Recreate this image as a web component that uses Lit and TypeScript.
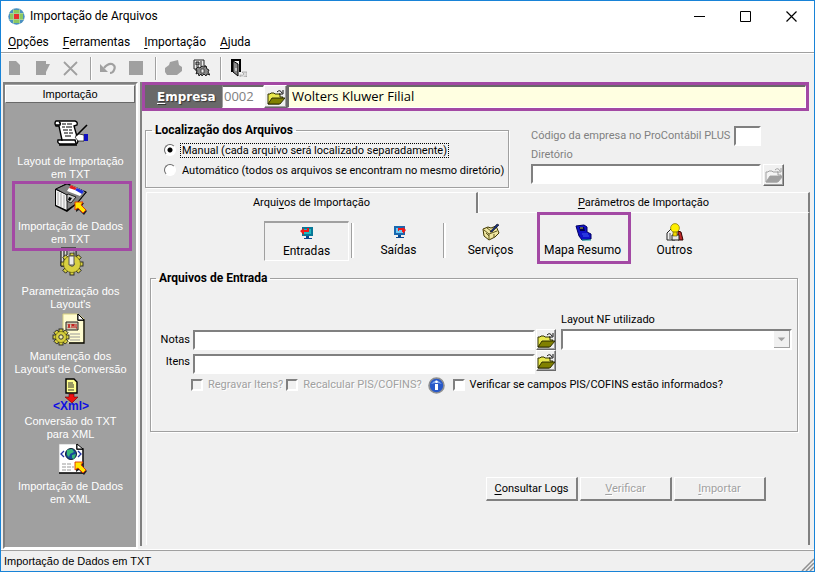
import { LitElement, html, css, svg } from "lit";
import { customElement, property, state } from "lit/decorators.js";
import { classMap } from "lit/directives/class-map.js";

const gear = (cx: number, cy: number, r: number) => svg`
  <g transform="translate(${cx} ${cy})">
    ${[0, 45, 90, 135].map(
      (a) => svg`<rect x="-2" y=${-r} width="4" height=${r * 2} fill="#d8d040" stroke="#222" stroke-width=".9" transform="rotate(${a})"/>`
    )}
    <circle r=${r - 2.5} fill="#d8d040" stroke="#555000" stroke-width=".6"/>
    <circle r="2.2" fill="#f4f0b0" stroke="#333"/>
  </g>`;

const arrow = svg`<path d="M21 20h8l-2 3 5 5-3 4-5-5-3 2z" fill="#222"/>
  <path d="M20 19h8l-2 3 5 5-3 3-5-5-3 2z" fill="#ffe800" stroke="#e03000" stroke-width=".9"/>`;

const big: Record<string, unknown> = {
  scroll: svg`
    <path d="M1 3h19q3 1 2 4l-3 1 4 14q0 4-3 4H5q-3-1-2-4h4L4 8H1q-2-3 0-5z" fill="#fff" stroke="#000" stroke-width="1.4"/>
    <path d="M1 7h4q1-2-1-3M6 22h14l1 3M4 27h18" fill="none" stroke="#000" stroke-width="1.5"/>
    <path d="M7 6h4m1 0h5M7 9h3m1 0h6M8 12h5m1 0h3M9 15h4m1 0h4M10 18h6" stroke="#000" stroke-width="1.2"/>
    <path d="M32 7L21 18" stroke="#000" stroke-width="1.6"/>
    <path d="M20 19l4-3 5 1v6h-6z" fill="#fff" stroke="#000" stroke-width=".7"/>
    <path d="M29 16h4v7h-4z" fill="#1010c0"/>`,
  floppy: svg`
    <path d="M0 6v17l12 6 10-8L32 9 12 0z" fill="#000"/>
    <path d="M1 7l11 5v15L1 22z" fill="#f4f4f4"/>
    <path d="M3 9v13M6 10v14M9 12v13" stroke="#a8a8a8"/>
    <path d="M1 6l11-5 19 8-9 11-10 7V12z" fill="#808080" stroke="#000" stroke-width=".8"/>
    <path d="M16 2l13 6-4 5-13-5z" fill="#fff"/>
    <path d="M16 2l6 3-2 2-6-2z" fill="#e02020"/><path d="M22 5l7 3-2 3-7-4z" fill="#2030e0"/>
    <path d="M13 11l8 3-5 6-4-2V12z" fill="#c8c8c8" stroke="#000" stroke-width=".8"/><path d="M14 14l3 1-2 3-2-1z" fill="#000"/>
    ${arrow}`,
  params: svg`
    <path d="M6 0h15v18H6z" fill="#d8d8d8" stroke="#000"/>
    <path d="M9 3v12M12 2v5" stroke="#000"/><path d="M14 3h5v7h-5z" fill="#fff" stroke="#777"/>
    ${gear(17, 16, 11)}
    <path d="M14 8h5v9h-5z" fill="#eee" stroke="#555"/>`,
  xmlGear: svg`
    <path d="M8 1h15l6 5v24H8z" fill="#fffcd0" stroke="#d8d080"/>
    <path d="M23 1v6h6v23H14" fill="none" stroke="#000" stroke-width="1.3"/><path d="M23 1l6 6h-6z" fill="#fff" stroke="#000"/>
    <path d="M11 9h12v8H11z" fill="#d0c8b0" stroke="#222"/>
    <path d="M13 11l2 4m0-4l-2 4m4 0v-4l1 2 1-2v4m2-4v4h1" stroke="#c01010" fill="none"/>
    <path d="M15 21h10M15 24h10M15 27h10" stroke="#999"/>
    ${gear(6, 24, 8)}`,
  toXml: svg`
    <path d="M11 1h8l3 3v11H11z" fill="#ffff90" stroke="#000" stroke-width="1.4"/>
    <path d="M13 5h5M13 7h6M13 9h6M13 12h6" stroke="#333"/>
    <path d="M14 16h5v3h4l-6 6-7-6h4z" fill="#f01010" stroke="#600" stroke-width=".6"/>
    <text x="16" y="32" class="xmltext">&lt;Xml&gt;</text>`,
  globe: svg`
    <path d="M4 1h18l6 5v24H4z" fill="#fff" stroke="#aaa" stroke-width=".6"/>
    <path d="M22 1v5h6v24H4" fill="none" stroke="#000" stroke-width="1.4"/><path d="M22 1l6 5h-6z" fill="#fff" stroke="#000"/>
    <circle cx="16" cy="11" r="5.5" fill="#184898" stroke="#102030"/>
    <path d="M12 7l5-1 2 3-4 2-1 3-2-2zM17 12l4-1-2 5-2-1z" fill="#38b878"/>
    <path d="M9 8l-3 3 3 3M23 8l3 3-3 3" fill="none" stroke="#2030a0" stroke-width="1.3"/>
    <path d="M7 21h10M7 24h12M7 27h10" stroke="#999" stroke-dasharray="4 1"/>${arrow}`,
};

const small: Record<string, unknown> = {
  page: svg`<path d="M3 2h7l4 4v10H3z" fill="#a0a0a0"/>`,
  edit: svg`<path d="M2 2h10v3h4l-4 8v3H2z" fill="#a0a0a0"/>`,
  cross: svg`<path d="M2 3l13 13M15 3L2 16" stroke="#a0a0a0" stroke-width="1.8"/>`,
  undo: svg`<path d="M5 9q4-5 8-4 4 2 2 6-1 3-4 3" fill="none" stroke="#a0a0a0" stroke-width="2.2"/><path d="M1 5v8h8z" fill="#a0a0a0"/>`,
  square: svg`<path d="M2 2h14v14H2z" fill="#a0a0a0"/>`,
  print: svg`<path d="M6 3l8-2 1 5 3 2v4l-5 4H3l-2-3V9l4-3z" fill="#a0a0a0"/>`,
  machine: svg`<path d="M2 1h10v6h2v5H4V10H2z" fill="#eee" stroke="#222"/>
    <path d="M4 3h3v3H4zM9 2v6M4 8h3" stroke="#222" fill="#999"/>
    <path d="M4 10l2-2 2 1 2-2 2 1 2-1 1 3 2 1-1 2 2 3-3-1-1 2-2-2-2 2-1-2-2 2-1-3-2 1 1-3z" fill="#888" stroke="#111" stroke-width=".9"/>
    <path d="M9 10h3v4H9z" fill="#eee" stroke="#333" stroke-width=".8"/>`,
  door: svg`<path d="M2 0h10v13h-2V2H4v11H2z" fill="#000"/><path d="M4 2l5 3v12l-5-4z" fill="#888" stroke="#000"/>
    <path d="M7 9v3" stroke="#fff"/><path d="M11 16q3 1 4-1l-2-2h5v5l-1-1q-3 3-6 1z" fill="#ddd" stroke="#999" stroke-width=".7"/>`,
  folder: svg`<path d="M1 6h2l1-1h3l1 1h5v3h3l-4 7H1z" fill="#e8e850" stroke="#333300"/>
    <path d="M5 10h13l-5 6H1z" fill="#808000" stroke="#222200" stroke-width=".9"/><path d="M10 4q3-3 5 1M16 2v4h-4" fill="none" stroke="#111"/>`,
  folderOff: svg`<path d="M1 6h2l1-1h3l1 1h5v3h3l-4 7H1z" fill="#f4f4f4" stroke="#a0a0a0"/>
    <path d="M5 10h13l-5 6H1z" fill="#a0a0a0" stroke="#a0a0a0" stroke-width=".9"/><path d="M10 4q3-3 5 1M16 2v4h-4" fill="none" stroke="#a0a0a0"/>`,
  entradas: svg`<path d="M4 3h11v9H4z" fill="#087898"/><path d="M6 5h7v5H6z" fill="#20b8c0"/>
    <path d="M8 12h3v2H8zM6 14h8v1H6z" fill="#084890"/><path d="M2 7l4-3v2h3V4h2v4H6v3z" fill="#f01818"/>`,
  saidas: svg`<path d="M4 3h11v9H4z" fill="#1868b0"/><path d="M6 5h7v5H6z" fill="#70c8f0"/>
    <path d="M8 12h3v2H8zM6 14h8v1H6z" fill="#084890"/><path d="M8 5h5V4l3 3-3 4V9h-1V7H9v1H8z" fill="#f01818"/>`,
  servicos: svg`<path d="M1 6l5-2 3 1 5-2 3 7-4 4-6 3-5-4z" fill="#efe6a0" stroke="#403800"/>
    <path d="M2 7l5 4 8-3M7 11v5M4 10l3 3M12 11v3M5 5l4 3" stroke="#605820" fill="none"/><path d="M8 9l7-8 2 1-7 7z" fill="#183080" stroke="#111" stroke-width=".6"/>`,
  mapa: svg`<path d="M2 3l8-1 3 2v5l4 2v5l-9 1-3-4z" fill="#1010c8" stroke="#000060"/>
    <path d="M5 4h5l1 4H6z" fill="#000050"/><path d="M6 5h3" stroke="#c0c040"/><path d="M8 11h6M9 13h6" stroke="#4060f0"/><path d="M8 17h9" stroke="#10a0a0"/>`,
  outros: svg`<path d="M1 10l4-4 4 3v8H1z" fill="#f0f0f0" stroke="#222"/><path d="M4 10v6" stroke="#555"/>
    <path d="M12 8l3 1 2 8h-5z" fill="#c02828" stroke="#300"/><path d="M6 12h7v5H6z" fill="#e8e8e8" stroke="#222"/>
    <circle cx="9" cy="5" r="4.4" fill="#fff000" stroke="#807000" stroke-width=".7"/><path d="M7 9h4v4H7z" fill="#f0d800" stroke="#605000" stroke-width=".6"/>`,
};

const icon = (name: string) => html`<svg class="ico" viewBox="0 0 18 18" aria-hidden="true">${small[name]}</svg>`;

@customElement("side-item")
class SideItem extends LitElement {
  @property() icon = "";
  @property({ type: Array }) lines: string[] = [];
  @property({ type: Boolean }) marked = false;

  static styles = css`
    :host { display: block; }
    .item {
      display: flex; flex-direction: column; align-items: center; gap: 5px;
      width: 100%; height: 65px; padding: 0; border: 0; background: none; color: #fff;
      font: 11px/13px "Liberation Sans", Arial, sans-serif; white-space: nowrap;
    }
    .pic { width: 32px; height: 32px; flex: none; overflow: visible; }
    .xmltext { font: bold 12px "Liberation Sans", sans-serif; fill: #1010e0; text-anchor: middle; }
    .marked { position: relative; z-index: 1; }
    .marked::after { content: ""; position: absolute; inset: -2px 4px -3px 7px; border: 3px solid #a349a4; }
  `;

  render() {
    return html`<button class=${classMap({ item: true, marked: this.marked })}>
      <svg class="pic" viewBox="0 0 32 32" aria-hidden="true">${big[this.icon]}</svg>
      <span>${this.lines[0]}<br />${this.lines[1]}</span>
    </button>`;
  }
}

@customElement("app-root")
class AppRoot extends LitElement {
  @state() private mode = "manual";

  private modules = [
    { icon: "scroll", lines: ["Layout de Importação", "em TXT"] },
    { icon: "floppy", lines: ["Importação de Dados", "em TXT"], marked: true },
    { icon: "params", lines: ["Parametrização dos", "Layout's"] },
    { icon: "xmlGear", lines: ["Manutenção dos", "Layout's de Conversão"] },
    { icon: "toXml", lines: ["Conversão do TXT", "para XML"] },
    { icon: "globe", lines: ["Importação de Dados", "em XML"] },
  ];
  private kinds = [
    ["entradas", "Entradas"],
    ["saidas", "Saídas"],
    ["servicos", "Serviços"],
    ["mapa", "Mapa Resumo"],
    ["outros", "Outros"],
  ];

  static styles = css`
    :host { display: block; }
    * { box-sizing: border-box; }
    button, input, select { font: inherit; color: inherit; margin: 0; }
    button { padding: 0; }
    u { text-underline-offset: 2px; }
    .ico { width: 18px; height: 18px; display: block; flex: none; }
    .window {
      display: flex; flex-direction: column; min-height: 100vh; border: 1px solid #1883d7;
      background: #f0f0f0; color: #000; font: 11px/14px Roboto, "Noto Sans", sans-serif; white-space: nowrap;
    }
    .title { display: flex; align-items: center; height: 30px; padding-left: 7px; background: #fff; font-size: 12px; }
    .title h1 { font: inherit; margin: 0 0 0 5px; flex: 1; }
    .logo { width: 17px; height: 17px; }
    .win { width: 46px; height: 30px; border: 0; background: none; display: grid; place-items: center; }
    .menu { display: flex; gap: 14px; height: 22px; padding: 0 7px; align-items: center; background: #fff; border-bottom: 1px solid #a0a0a0; font-size: 12px; }
    .menu a { color: inherit; text-decoration: none; }
    .tools { display: flex; align-items: center; height: 29px; padding-left: 5px; border-top: 1px solid #fff; }
    .tools button { width: 28px; height: 26px; border: 0; background: none; display: grid; place-items: center start; }
    .tools hr { width: 2px; height: 23px; margin: 0 7px 0 0; border: 0; border-left: 1px solid #a0a0a0; background: #fff; }
    .body { display: flex; flex: 1; border-bottom: 1px solid #fff; }
    .side { width: 135px; flex: none; margin-left: 2px; background: #a0a0a0; border: 2px solid; border-color: #808080 #fff #fff #808080; }
    .side h2 { margin: 1px 1px 15px 0; height: 18px; font: 11px/17px "Liberation Sans", Arial, sans-serif; text-align: center; background: #f0f0f0; border: 1px solid; border-color: #fff #696969 #696969 #fff; }
    .main { flex: 1; min-width: 0; margin: 0 4px 3px 2px; border-left: 2px solid #808080; }
    .company { display: flex; height: 29px; margin-right: 1px; border: 3px solid #a349a4; background: #696969; }
    .company label { width: 77px; padding-left: 12px; font: bold 12px/24px "DejaVu Sans", Verdana, sans-serif; color: #fff; text-shadow: 1px 1px 1px #333; }
    .company input { border: 1px solid; border-width: 2px 1px 1px 2px; border-color: #696969 #fff #fff #696969; padding: 0 0 2px 3px; border-radius: 0; height: 23px; font-size: 13px; min-width: 0; font-family: "Open Sans", "Noto Sans", sans-serif; }
    .company .code { width: 42px; color: #808080; padding-left: 1px; background: #fff; border-left: 1px solid #a0a0a0; }
    .company .name { flex: 1; background: #ffffe1; }
    .pick { width: 20px; height: 21px; border: 1px solid; border-color: #fff #696969 #696969 #fff; box-shadow: inset -1px -1px #a0a0a0; background: #f0f0f0; display: grid; place-items: center; flex: none; }
    .company .pick { width: 23px; height: 23px; }
    .where { display: grid; grid-template-columns: 364px 1fr; gap: 22px; padding: 11px 0 0 3px; }
    fieldset { margin: 0; min-width: 0; border: 1px solid #a0a0a0; box-shadow: 1px 1px #fff, inset 1px 1px #fff; }
    legend { padding: 0 3px; font: bold 12px/16px Roboto, "Noto Sans", sans-serif; }
    .mode { height: 66px; padding: 2px 4px 0 18px; }
    .mode legend { margin-left: -12px; }
    .mode label { display: flex; align-items: center; gap: 5px; height: 20px; }
    .mode span { padding: 0 1px; line-height: 13px; }
    .mode input { appearance: none; flex: none; width: 12px; height: 12px; border: 1px solid; border-color: #696969 #fff #fff #696969; border-radius: 50%; background: #fff; }
    .mode input:checked { background: radial-gradient(circle, #000 2px, #fff 3px); }
    .mode input:checked + span { outline: 1px dotted #000; }
    .field { border: 2px solid; border-color: #808080 #fff #fff #808080; background: #fff; height: 20px; border-radius: 0; padding: 0 2px; min-width: 0; }
    .source { color: #808080; padding: 2px 26px 0 0; }
    .codeline { display: flex; align-items: center; justify-content: space-between; height: 24px; margin-right: 23px; }
    .codeline .field { width: 27px; }
    .dir { display: grid; grid-template-columns: 1fr 21px; gap: 2px; }
    .dir label { grid-column: 1 / 3; height: 14px; }
    .dir .pick { width: 21px; height: 22px; }
    .tabs { display: grid; grid-template-columns: 1fr 1fr; margin: 4px 0 0 4px; }
    .tab { height: 21px; border: 0; border-top: 1px solid #fff; border-left: 1px solid #fff; border-right: 2px solid #808080; background: none; }
    .tab + .tab { border-bottom: 1px solid #fff; }
    .panel { margin-left: 4px; border-left: 1px solid #fff; border-right: 2px solid #808080; padding: 8px 10px 44px 3px; }
    .kinds { display: grid; grid-template-columns: repeat(5, 92px); width: max-content; margin: 0 auto; padding-left: 40px; }
    .kind { position: relative; height: 40px; margin-right: 7px; border: 0; border-top: 2px solid transparent; background: none; font-size: 12px; line-height: 16px; display: flex; flex-direction: column; align-items: center; gap: 1px; }
    .kind.on { border: solid; border-width: 2px 1px 1px; border-color: #a0a0a0 #fff #fff #a0a0a0; padding-top: 1px; }
    .kind.sep::before { content: ""; position: absolute; left: -5px; top: 0; width: 2px; height: 35px; background: #fff; border-left: 1px solid #a0a0a0; }
    .kind.mark::after { content: ""; position: absolute; inset: -11px -6px -3px -3px; border: 3px solid #a349a4; }
    .files { margin-top: 9px; height: 162px; padding: 25px 5px 0 9px; }
    .files legend { margin-left: -4px; }
    .grid { display: grid; grid-template-columns: 30px 1fr 20px 235px; grid-template-rows: 18px 21px 24px; column-gap: 1px; align-items: center; }
    .grid .lab { text-align: right; }
    .grid .cap { grid-column: 4; }
    .grid .cap, .grid .combo { margin-left: 4px; }
    .grid > .field { margin-left: 2px; align-self: end; }
    .grid .pick { align-self: start; }
    .combo { position: relative; }
    .combo select { appearance: none; width: 100%; height: 21px; display: block; opacity: 1; }
    .combo svg { position: absolute; right: 2px; top: 2px; width: 16px; height: 17px; background: #f0f0f0; border-right: 1px solid #a0a0a0; border-bottom: 1px solid #a0a0a0; pointer-events: none; }
    .checks { display: flex; align-items: center; height: 18px; margin: 2px 0 0 31px; color: #a0a0a0; }
    .checks label { display: flex; align-items: center; gap: 5px; text-shadow: 1px 1px #fff; }
    .checks label + label { margin-left: 3px; }
    .checks input { appearance: none; flex: none; width: 12px; height: 12px; border: 2px solid; border-color: #808080 #fff #fff #808080; }
    .checks svg { width: 17px; height: 17px; margin: 0 8px 0 6px; }
    .checks .live { color: #000; text-shadow: none; }
    .checks .live input { background: #fff; }
    .actions { display: flex; justify-content: flex-end; gap: 2px; margin: 45px 32px 0 0; }
    .actions button { width: 92px; height: 24px; background: #f0f0f0; border: solid; border-width: 1px 2px 2px 1px; border-color: #fff #808080 #808080 #fff; }
    .actions button:disabled { color: #a0a0a0; text-shadow: 1px 1px #fff; }
    .status { display: flex; align-items: center; justify-content: space-between; height: 21px; padding-left: 3px; border-top: 1px solid #a0a0a0; font: 11px/16px "Liberation Sans", Arial, sans-serif; }
    .status svg { align-self: flex-end; width: 13px; height: 13px; }
  `;

  private tool(name: string, label: string) {
    return html`<button aria-label=${label}>${icon(name)}</button>`;
  }

  private fileRow(id: string, label: string) {
    return html`<label class="lab" for=${id}>${label}</label><input class="field" id=${id} />
      <button class="pick" aria-label="Localizar ${label}">${icon("folder")}</button>`;
  }

  render() {
    return html`<div class="window">
      <header class="title">
        <svg class="logo" viewBox="0 0 17 17" aria-hidden="true">
          <circle cx="8.5" cy="8.5" r="8.2" fill="#4a90c0"/>
          <path d="M5 2h7v3h3v7h-3v3H5v-3H2V5h3z" fill="#8cc860"/>
          <path d="M5.5 1v15M11.5 1v15M1 5.500h15M1 11.500h15" stroke="#b0d8a8" stroke-width=".7"/>
          <path d="M6 6h5v5H6z" fill="#e83030"/>
        </svg>
        <h1>Importação de Arquivos</h1>
        <button class="win" aria-label="Minimizar"><svg width="11" height="11"><path d="M0 5.500h11" stroke="#000"/></svg></button>
        <button class="win" aria-label="Maximizar"><svg width="11" height="11"><path d="M.5.5h10v10H.5z" fill="none" stroke="#000"/></svg></button>
        <button class="win" aria-label="Fechar"><svg width="11" height="11"><path d="M.5.5l10 10M10.500.5l-10 10" stroke="#000" stroke-width="1.200"/></svg></button>
      </header>
      <nav class="menu">
        <a href="#"><u>O</u>pções</a><a href="#"><u>F</u>erramentas</a><a href="#"><u>I</u>mportação</a><a href="#"><u>A</u>juda</a>
      </nav>
      <div class="tools">
        ${this.tool("page", "Novo")}${this.tool("edit", "Editar")}${this.tool("cross", "Excluir")}<hr />
        ${this.tool("undo", "Desfazer")}${this.tool("square", "Gravar")}<hr />
        ${this.tool("print", "Imprimir")}${this.tool("machine", "Processar")}<hr />
        ${this.tool("door", "Sair")}
      </div>
      <div class="body">
        <aside class="side">
          <h2>Importação</h2>
          ${this.modules.map((m) => html`<side-item .icon=${m.icon} .lines=${m.lines} ?marked=${!!m.marked}></side-item>`)}
        </aside>
        <main class="main">
          <div class="company">
            <label for="code"><u>E</u>mpresa</label>
            <input class="code" id="code" value="0002" />
            <button class="pick" aria-label="Localizar empresa">${icon("folder")}</button>
            <input class="name" aria-label="Nome da empresa" readonly value="Wolters Kluwer Filial" />
          </div>
          <div class="where">
            <fieldset class="mode">
              <legend>Localização dos Arquivos</legend>
              <label><input type="radio" name="mode" .checked=${this.mode === "manual"} @change=${() => (this.mode = "manual")} /><span>Manual (cada arquivo será localizado separadamente)</span></label>
              <label><input type="radio" name="mode" .checked=${this.mode === "auto"} @change=${() => (this.mode = "auto")} /><span>Automático (todos os arquivos se encontram no mesmo diretório)</span></label>
            </fieldset>
            <div class="source">
              <div class="codeline"><label for="plus">Código da empresa no ProContábil PLUS</label><input class="field" id="plus" disabled /></div>
              <div class="dir">
                <label for="dir">Diretório</label><input class="field" id="dir" disabled />
                <button class="pick" disabled aria-label="Localizar diretório">${icon("folderOff")}</button>
              </div>
            </div>
          </div>
          <div class="tabs" role="tablist">
            <button class="tab" role="tab" aria-selected="true">Arqui<u>v</u>os de Importação</button>
            <button class="tab" role="tab" aria-selected="false"><u>P</u>arâmetros de Importação</button>
          </div>
          <div class="panel">
            <div class="kinds">
              ${this.kinds.map(([name, label], i) => html`<button
                class=${classMap({ kind: true, on: i === 0, sep: i === 1 || i === 2, mark: i === 3 })}>${icon(name)}${label}</button>`)}
            </div>
            <fieldset class="files">
              <legend>Arquivos de Entrada</legend>
              <div class="grid">
                <label class="cap" for="layout">Layout NF utilizado</label>
                ${this.fileRow("notas", "Notas")}
                <div class="combo"><select class="field" id="layout" disabled></select>
                  <svg viewBox="0 0 16 17" aria-hidden="true"><path d="M4 7h8l-4 4z" fill="#a0a0a0"/></svg></div>
                ${this.fileRow("itens", "Itens")}
              </div>
              <div class="checks">
                <label><input type="checkbox" disabled />Regravar Itens?</label>
                <label><input type="checkbox" disabled />Recalcular PIS/COFINS?</label>
                <svg viewBox="0 0 17 17" aria-hidden="true"><circle cx="8.5" cy="8.5" r="7.5" fill="#2858c8" stroke="#909090" stroke-width="1.6"/>
                  <path d="M3 7q5-7 11 0-5-2-11 0" fill="#80a8f0"/><circle cx="8.5" cy="4.8" r="1.3" fill="#fff"/><path d="M7 7h3v6H7z" fill="#fff"/></svg>
                <label class="live"><input type="checkbox" />Verificar se campos PIS/COFINS estão informados?</label>
              </div>
            </fieldset>
            <div class="actions">
              <button><u>C</u>onsultar Logs</button><button disabled><u>V</u>erificar</button><button disabled><u>I</u>mportar</button>
            </div>
          </div>
        </main>
      </div>
      <footer class="status"><span>Importação de Dados em TXT</span>
        <svg viewBox="0 0 13 13" aria-hidden="true"><path d="M1 13L13 1M5 13l8-8M9 13l4-4" stroke="#909090" stroke-width="1.5"/></svg>
      </footer>
    </div>`;
  }
}
